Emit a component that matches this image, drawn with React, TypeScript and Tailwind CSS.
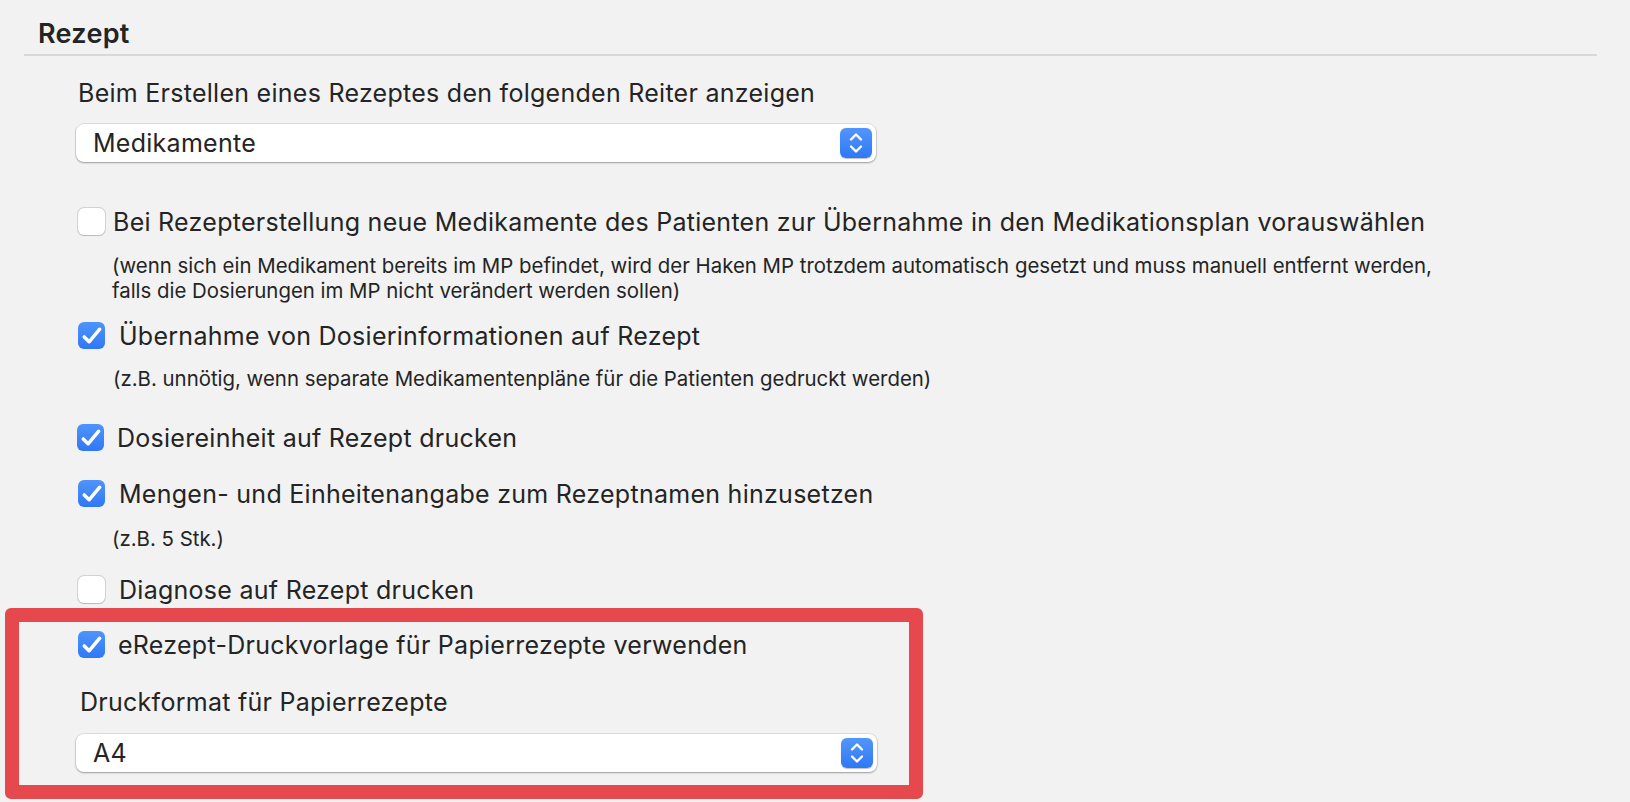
import React from "react";

function Stepper() {
  return (
    <div className="w-[32px] h-[30px] rounded-[6px] bg-gradient-to-b from-[#5296fb] to-[#2f78f5] flex items-center justify-center shadow-[0_0.5px_1px_rgba(0,0,0,0.25)]">
      <svg width="32" height="30" viewBox="0 0 32 30" fill="none">
        <path d="M11 11.5 L16 6.5 L21 11.5" stroke="white" strokeWidth="2.4" strokeLinecap="round" strokeLinejoin="round" />
        <path d="M11 18.5 L16 23.5 L21 18.5" stroke="white" strokeWidth="2.4" strokeLinecap="round" strokeLinejoin="round" />
      </svg>
    </div>
  );
}

function Select({ value, width }: { value: string; width: string }) {
  return (
    <div className={`${width} h-[38px] bg-white rounded-[8px] flex items-center justify-between pl-[17px] pr-[4px] shadow-[0_0_0_1px_rgba(0,0,0,0.08),0_1px_2px_rgba(0,0,0,0.3)]`}>
      <span className="text-[25px] tracking-[0.27px] leading-[30px]">{value}</span>
      <Stepper />
    </div>
  );
}

function Box({ checked }: { checked: boolean }) {
  if (checked) {
    return (
      <div className="w-[27px] h-[27px] shrink-0 rounded-[6px] bg-gradient-to-b from-[#4f94fb] to-[#2f78f5] flex items-center justify-center">
        <svg width="27" height="27" viewBox="0 0 28 28" fill="none">
          <path d="M6.5 15.5 L11.5 20.5 L22.5 7.5" stroke="white" strokeWidth="3.6" strokeLinecap="round" strokeLinejoin="round" />
        </svg>
      </div>
    );
  }
  return (
    <div className="w-[27px] h-[27px] shrink-0 rounded-[6px] bg-white shadow-[0_0_0_1px_rgba(0,0,0,0.12),0_0.5px_1px_rgba(0,0,0,0.12)]" />
  );
}

function Row({
  checked,
  label,
  gap,
  boxMl,
  className,
}: {
  checked: boolean;
  label: string;
  gap: string;
  boxMl: string;
  className: string;
}) {
  return (
    <div className={`flex items-start ${className}`}>
      <div className={boxMl}>
        <Box checked={checked} />
      </div>
      <span className={`${gap} text-[25px] tracking-[0.27px] leading-[28px] whitespace-nowrap`}>{label}</span>
    </div>
  );
}

export default function App() {
  return (
    <div className="w-[1630px] h-[802px] bg-[#f2f2f2] overflow-hidden font-['Inter',_sans-serif] text-[#242424]">
      <div className="pl-[24px] pr-[33px] pt-[18px]">
        <h1 className="pl-[14px] text-[27px] tracking-[0.3px] leading-[32px] font-semibold">Rezept</h1>
        <div className="mt-[4px] h-[2px] bg-[#d9d9d9]" />
      </div>

      <div className="pl-[76px]">
        <div className="mt-[22px] pl-[2px] text-[25px] tracking-[0.27px] leading-[30px]">
          Beim Erstellen eines Rezeptes den folgenden Reiter anzeigen
        </div>
        <div className="mt-[16px]">
          <Select value="Medikamente" width="w-[800px]" />
        </div>

        <Row
          className="mt-[46px]"
          boxMl="ml-[2px]"
          gap="ml-[8px]"
          checked={false}
          label="Bei Rezepterstellung neue Medikamente des Patienten zur Übernahme in den Medikationsplan vorauswählen"
        />
        <div className="mt-[17px] pl-[36px] text-[20.4px] leading-[25px]">
          <div>(wenn sich ein Medikament bereits im MP befindet, wird der Haken MP trotzdem automatisch gesetzt und muss manuell entfernt werden,</div>
          <div>falls die Dosierungen im MP nicht verändert werden sollen)</div>
        </div>

        <Row
          className="mt-[19px]"
          boxMl="ml-[2px]"
          gap="ml-[14px]"
          checked={true}
          label="Übernahme von Dosierinformationen auf Rezept"
        />
        <div className="mt-[16px] pl-[37px] text-[20.4px] leading-[25px]">
          (z.B. unnötig, wenn separate Medikamentenpläne für die Patienten gedruckt werden)
        </div>

        <Row
          className="mt-[33px]"
          boxMl="ml-[1px]"
          gap="ml-[13px]"
          checked={true}
          label="Dosiereinheit auf Rezept drucken"
        />

        <Row
          className="mt-[28px]"
          boxMl="ml-[2px]"
          gap="ml-[14px]"
          checked={true}
          label="Mengen- und Einheitenangabe zum Rezeptnamen hinzusetzen"
        />
        <div className="mt-[18px] pl-[36px] text-[20.4px] leading-[25px]">(z.B. 5 Stk.)</div>

        <Row
          className="mt-[25px]"
          boxMl="ml-[2px]"
          gap="ml-[14px]"
          checked={false}
          label="Diagnose auf Rezept drucken"
        />
      </div>

      <div className="mt-[4px] ml-[5px] w-[918px] border-[14px] border-[#e5484d] rounded-[6px] pt-[9px] pb-[13px] pl-[57px]">
        <Row
          className=""
          boxMl="ml-[2px]"
          gap="ml-[13px]"
          checked={true}
          label="eRezept-Druckvorlage für Papierrezepte verwenden"
        />
        <div className="mt-[28px] pl-[4px] text-[25px] tracking-[0.27px] leading-[30px]">Druckformat für Papierrezepte</div>
        <div className="mt-[17px]">
          <Select value="A4" width="w-[801px]" />
        </div>
      </div>
    </div>
  );
}
